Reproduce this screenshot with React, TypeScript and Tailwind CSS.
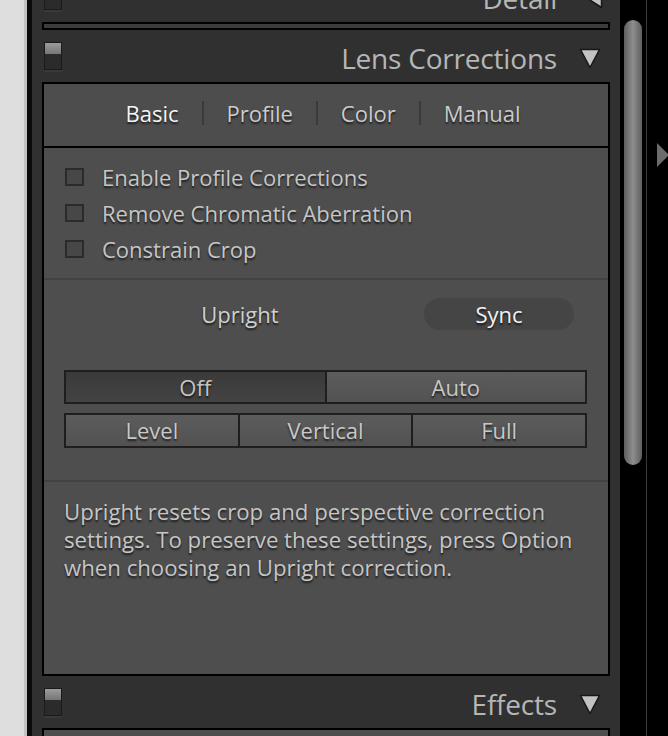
import React from "react";

const sh = "[text-shadow:0_2px_2px_rgba(0,0,0,0.65)]";

function Toggle() {
  return (
    <div className="flex flex-col">
      <div className="w-[18px] h-[28px] border border-[#1a1a1a] bg-[#2b2b2b] flex flex-col">
        <div className="h-[11px] bg-linear-to-b from-[#9c9c9c] to-[#767676]" />
      </div>
      <div className="w-[18px] h-[2px] bg-[#393939]" />
    </div>
  );
}

function TriDown() {
  return (
    <svg width="22" height="21" viewBox="0 0 22 21">
      <polygon points="1.5,1.5 20.5,1.5 11,19.5" fill="#c2c2c2" stroke="#161616" strokeWidth="1.5" strokeLinejoin="round" />
    </svg>
  );
}

function TriLeft() {
  return (
    <svg width="17" height="21" viewBox="0 0 17 21">
      <polygon points="15.5,1.5 15.5,19.5 1.5,10.5" fill="#c2c2c2" stroke="#161616" strokeWidth="1.5" strokeLinejoin="round" />
    </svg>
  );
}

function Header({ title, left }: { title: string; left?: boolean }) {
  return (
    <div className="h-[52px] flex pl-[12px] pr-[19px] shrink-0">
      <div className="pt-[12px]">
        <Toggle />
      </div>
      <div className="flex-1" />
      <div className={`flex items-center pt-[4px] ${left ? "gap-[29px]" : "gap-[22px]"}`}>
        <span className="text-[28px] leading-none text-[#b6b6b6] tracking-[-0.2px]">{title}</span>
        {left ? <div className="mr-[-2px]"><TriLeft /></div> : <TriDown />}
      </div>
    </div>
  );
}

function Check({ label }: { label: string }) {
  return (
    <div className="h-[36px] flex items-center pl-[21px] gap-[18px]">
      <div className="w-[19px] h-[18px] border-2 border-[#2b2b2b] bg-[#474747]" />
      <span className={`text-[22px] text-[#c6c6c6] ${sh}`}>{label}</span>
    </div>
  );
}

function Btn({ label, dark, first }: { label: string; dark?: boolean; first?: boolean }) {
  return (
    <div
      className={`flex-1 flex items-center justify-center text-[22px] ${sh} ${
        first ? "" : "border-l-2 border-[#1e1e1e]"
      } ${
        dark
          ? "bg-linear-to-b from-[#3a3a3a] to-[#434343] text-[#c4c4c4]"
          : "bg-linear-to-b from-[#5c5c5c] to-[#525252] text-[#c8c8c8]"
      }`}
    >
      {label}
    </div>
  );
}

export default function App() {
  return (
    <div className="w-[668px] h-[736px] overflow-hidden flex bg-black font-['Open_Sans',sans-serif]">
      <div className="w-[24px] h-full bg-[#dedede] shrink-0" />
      <div className="w-[3px] h-full bg-[#c4c4c4] shrink-0" />
      <div className="w-[5px] h-full bg-[#0b0b0b] shrink-0" />
      <div className="w-[588px] h-full bg-[#303030] flex flex-col shrink-0">
        <div className="mt-[-30px]">
          <Header title="Detail" left />
        </div>
        <div className="mx-[10px] h-[8px] border-2 border-black bg-[#3d3d3d] shrink-0" />
        <Header title="Lens Corrections" />
        <div className="mx-[10px] border-2 border-black bg-[#4e4e4e] flex flex-col shrink-0">
          <div className="h-[64px] pb-[4px] border-b-2 border-black bg-[#4d4d4d] flex items-center justify-center gap-[23px] pr-[6px]">
            <span className={`text-[22px] text-[#f4f4f4] ${sh}`}>Basic</span>
            <div className="w-[2px] h-[24px] bg-[#3a3a3a]" />
            <span className={`text-[22px] text-[#cbcbcb] ${sh}`}>Profile</span>
            <div className="w-[2px] h-[24px] bg-[#3a3a3a]" />
            <span className={`text-[22px] text-[#cbcbcb] ${sh}`}>Color</span>
            <div className="w-[2px] h-[24px] bg-[#3a3a3a]" />
            <span className={`text-[22px] text-[#cbcbcb] ${sh}`}>Manual</span>
          </div>
          <div className="pt-[11px] pb-[11px] border-b-2 border-[#424242] flex flex-col">
            <Check label="Enable Profile Corrections" />
            <Check label="Remove Chromatic Aberration" />
            <Check label="Constrain Crop" />
          </div>
          <div className="pt-[18px] pb-[32px] border-b-2 border-[#424242] flex flex-col pl-[20px] pr-[21px]">
            <div className="h-[32px] flex items-center">
              <div className={`w-[352px] text-center text-[22px] text-[#d0d0d0] ${sh}`}>Upright</div>
              <div className="ml-[8px] w-[150px] h-[32px] rounded-full bg-[#454545] flex items-center justify-center">
                <span className={`text-[22px] text-[#f2f2f2] ${sh}`}>Sync</span>
              </div>
            </div>
            <div className="mt-[40px] h-[34px] border-2 border-[#1e1e1e] flex">
              <Btn label="Off" dark first />
              <Btn label="Auto" />
            </div>
            <div className="mt-[9px] h-[35px] border-2 border-[#1e1e1e] flex">
              <Btn label="Level" first />
              <Btn label="Vertical" />
              <Btn label="Full" />
            </div>
          </div>
          <div className="h-[192px] pt-[16px] pl-[20px] pr-[12px]">
            <p className={`text-[22.2px] leading-[28px] text-[#c6c6c6] ${sh}`}>
              Upright resets crop and perspective correction settings. To preserve these settings, press Option when choosing an Upright correction.
            </p>
          </div>
        </div>
        <Header title="Effects" />
        <div className="mx-[10px] h-[20px] border-t-2 border-x-2 border-black bg-[#4e4e4e] shrink-0" />
      </div>
      <div className="flex-1 h-full flex bg-black">
        <div className="ml-[4px] mt-[20px] w-[18px] h-[445px] rounded-full bg-linear-to-r from-[#5e5e5e] via-[#8e8e8e] to-[#5e5e5e] shrink-0" />
        <div className="ml-[4px] w-px h-full bg-[#3c3c3c] shrink-0" />
        <div className="ml-[10px] mt-[143px] shrink-0">
          <svg width="12" height="24" viewBox="0 0 12 24">
            <polygon points="0,0 12,12 0,24" fill="#6c6c6c" />
          </svg>
        </div>
      </div>
    </div>
  );
}
